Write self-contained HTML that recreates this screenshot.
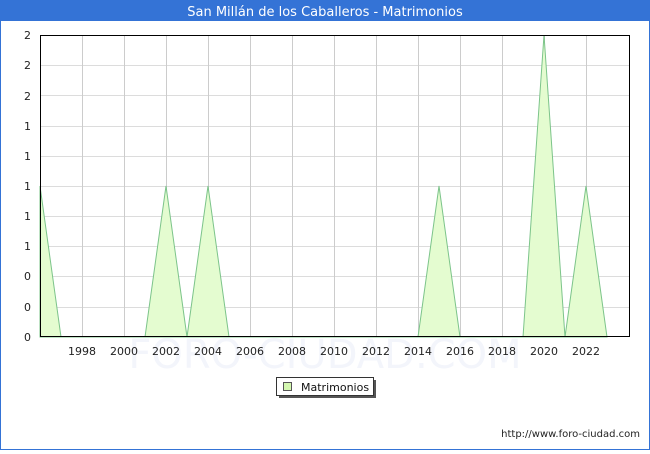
<!DOCTYPE html>
<html><head><meta charset="utf-8"><style>
body{margin:0;width:650px;height:450px;overflow:hidden;background:#fff;font-family:"DejaVu Sans","Liberation Sans",sans-serif}
</style></head><body>
<svg width="650" height="450" xmlns="http://www.w3.org/2000/svg" font-family="DejaVu Sans, Liberation Sans, sans-serif">
<rect x="0.5" y="0.5" width="649" height="449" fill="#fff" stroke="#3473d6"/>
<rect x="0" y="0" width="650" height="21" fill="#3473d6"/>
<text x="325" y="16" text-anchor="middle" fill="#fff" font-size="13">San Millán de los Caballeros - Matrimonios</text>
<text x="325" y="368" text-anchor="middle" fill="#f3f5fb" font-size="40">FORO-CIUDAD.COM</text>
<g stroke="#dcdcdc" stroke-width="1">
<line x1="40" y1="65.5" x2="630" y2="65.5"/><line x1="40" y1="95.5" x2="630" y2="95.5"/><line x1="40" y1="126.5" x2="630" y2="126.5"/><line x1="40" y1="156.5" x2="630" y2="156.5"/><line x1="40" y1="186.5" x2="630" y2="186.5"/><line x1="40" y1="216.5" x2="630" y2="216.5"/><line x1="40" y1="246.5" x2="630" y2="246.5"/><line x1="40" y1="276.5" x2="630" y2="276.5"/><line x1="40" y1="307.5" x2="630" y2="307.5"/>
</g>
<g stroke="#cccccc">
<line x1="82.5" y1="35" x2="82.5" y2="337"/><line x1="124.5" y1="35" x2="124.5" y2="337"/><line x1="166.5" y1="35" x2="166.5" y2="337"/><line x1="208.5" y1="35" x2="208.5" y2="337"/><line x1="250.5" y1="35" x2="250.5" y2="337"/><line x1="292.5" y1="35" x2="292.5" y2="337"/><line x1="334.5" y1="35" x2="334.5" y2="337"/><line x1="376.5" y1="35" x2="376.5" y2="337"/><line x1="418.5" y1="35" x2="418.5" y2="337"/><line x1="460.5" y1="35" x2="460.5" y2="337"/><line x1="502.5" y1="35" x2="502.5" y2="337"/><line x1="544.5" y1="35" x2="544.5" y2="337"/><line x1="586.5" y1="35" x2="586.5" y2="337"/>
</g>
<polygon fill="#e4fcd0" stroke="#7cc48a" stroke-width="1" points="40,337 40,186 61,337 145,337 166,186 187,337 208,186 229,337 418,337 439,186 460,337 523,337 544,35 565,337 586,186 607,337"/>
<rect x="40.5" y="35.5" width="589" height="301" fill="none" stroke="#000"/>
<g font-size="11" fill="#222" text-anchor="end">
<text x="31" y="39">2</text><text x="31" y="69">2</text><text x="31" y="100">2</text><text x="31" y="130">1</text><text x="31" y="160">1</text><text x="31" y="190">1</text><text x="31" y="220">1</text><text x="31" y="250">1</text><text x="31" y="280">0</text><text x="31" y="311">0</text><text x="31" y="341">0</text>
</g>
<g font-size="11" fill="#222" text-anchor="middle">
<text x="82" y="355">1998</text><text x="124" y="355">2000</text><text x="166" y="355">2002</text><text x="208" y="355">2004</text><text x="250" y="355">2006</text><text x="292" y="355">2008</text><text x="334" y="355">2010</text><text x="376" y="355">2012</text><text x="418" y="355">2014</text><text x="460" y="355">2016</text><text x="502" y="355">2018</text><text x="544" y="355">2020</text><text x="586" y="355">2022</text>
</g>
<rect x="279" y="380" width="97" height="18" fill="#555"/>
<rect x="276.5" y="377.5" width="97" height="18" fill="#fff" stroke="#333"/>
<rect x="283.5" y="382.5" width="8" height="8" fill="#d4f8b0" stroke="#555"/>
<text x="301" y="391" font-size="11" fill="#111">Matrimonios</text>
<text x="640" y="437" text-anchor="end" font-size="10" fill="#222">http://www.foro-ciudad.com</text>
</svg>
</body></html>
